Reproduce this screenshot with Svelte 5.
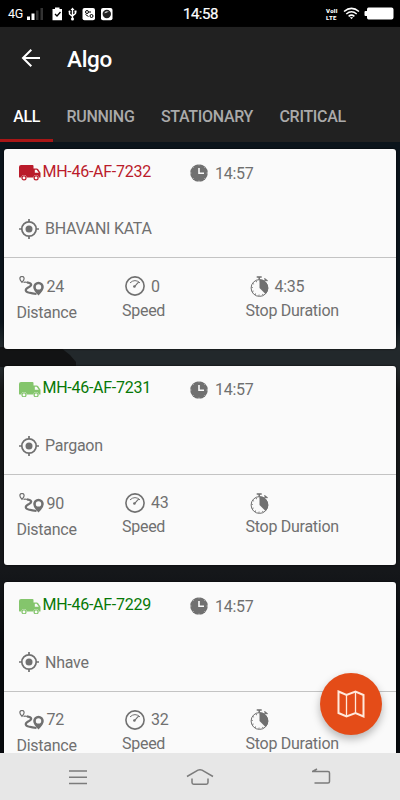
<script>
  const tabs = ['ALL', 'RUNNING', 'STATIONARY', 'CRITICAL'];
  const vehicles = [
    { plate: 'MH-46-AF-7232', time: '14:57', place: 'BHAVANI KATA', distance: '24', speed: '0', stop: '4:35', stopped: true },
    { plate: 'MH-46-AF-7231', time: '14:57', place: 'Pargaon', distance: '90', speed: '43', stop: '', stopped: false },
    { plate: 'MH-46-AF-7229', time: '14:57', place: 'Nhave', distance: '72', speed: '32', stop: '', stopped: false }
  ];
</script>

<div class="app">
  <div class="status">
    <span class="net">4G</span>
    <svg class="signal" width="17" height="14" viewBox="0 0 17 14">
      <path d="M0 9.500h3V13H0z M4.500 6.500h3V13h-3z" fill="#fff" />
      <path d="M9 3.500h2.500V13H9z M13.500 1H16v12h-2.500z" fill="#333" />
    </svg>
    <svg class="notes" width="62" height="14" viewBox="0 0 62 14">
      <path d="M.5 2H3V.5h4.500V2H10v11.300H.5z" fill="#fff" />
      <path d="M3 7l2 2 3.500-4" fill="none" stroke="#000" stroke-width="1.300" />
      <g fill="none" stroke="#fff" stroke-width="1.400">
        <path d="M20.500 2v10M17.500 4.500V7l3 2.500M23.500 4.500V6.500l-3 2.500" />
      </g>
      <path d="M18.500 3l2-2.500 2 2.500z" fill="#fff" /><circle cx="20.500" cy="12" r="1.500" fill="#fff" />
      <circle cx="17.500" cy="4.500" r="1" fill="#fff" /><path d="M22.500 3.500h2v2h-2z" fill="#fff" />
      <rect x="30.500" y="1" width="12.500" height="12.300" rx="2" fill="#fff" />
      <g fill="none" stroke="#000" stroke-width="1"><circle cx="35" cy="5" r="1.500" /><circle cx="39.500" cy="9" r="1.500" /><path d="M33.500 7.500l3 2M38 4v2" /></g>
      <rect x="49" y="1" width="11.500" height="12.300" rx="2" fill="#fff" />
      <circle cx="54.800" cy="7" r="4.200" fill="#222" /><path d="M52 6.300l2-2.100 3 .3-3 1.600z" fill="#ccc" />
    </svg>
    <span class="clock">14:58</span>
    <span class="volte"><span>Voll</span><span>LTE</span></span>
    <svg class="wifi" width="17" height="13" viewBox="0 0 17 13" fill="none" stroke="#fff" stroke-width="1.500">
      <path d="M1 4.500Q8.500-1.800 16 4.500M3.300 7Q8.500 2.600 13.700 7M5.600 9.300Q8.500 6.900 11.400 9.300" />
      <path d="M6.800 10.200h3.400L8.500 12.300z" fill="#fff" stroke="none" />
    </svg>
    <svg class="battery" width="30" height="13" viewBox="0 0 30 13">
      <path d="M4.500.500h23q2 0 2 2v8q0 2-2 2h-23q-1.500 0-1.500-2V9H1.500Q.5 9 .5 8V5Q.5 4 1.500 4H3V2.500q0-2 1.500-2z" fill="#fff" />
    </svg>
  </div>

  <header>
    <div class="titlebar">
      <svg width="20" height="20" viewBox="0 0 20 20" fill="none" stroke="#fff" stroke-width="2">
        <path d="M19 10H3M10.300 1.700L2 10l8.300 8.300" />
      </svg>
      <h1>Algo</h1>
    </div>
    <nav class="tabs">
      {#each tabs as tab, i}
        <span class="tab" class:active={i === 0}>{tab}</span>
      {/each}
    </nav>
  </header>

  <main>
    <svg class="ridge" width="400" height="20" viewBox="0 0 400 20">
      <path d="M0 0H60L70 8 76 15V20H0z" fill="#121314" />
    </svg>
    {#each vehicles as v}
      <article>
        <div class="top">
          <div class="plate" class:stopped={v.stopped}>
            <svg width="22" height="15.500" viewBox="0 0 22 16" preserveAspectRatio="none">
              <path d="M2 0h11.500q1 0 1 1v2.500h3.200q.8 0 1.300.7L21.500 8v5H19.700a2.600 2.600 0 0 0-5.200 0H7.600a2.600 2.600 0 0 0-5.200 0H1q-1 0-1-1V2Q0 0 2 0z" fill="currentColor" />
              <path d="M15.800 5h1.900l2.100 3h-4z" fill="#fafafa" />
              <circle cx="5" cy="13.300" r="2" fill="#fafafa" stroke="currentColor" stroke-width="1.200" />
              <circle cx="17.100" cy="13.300" r="2" fill="#fafafa" stroke="currentColor" stroke-width="1.200" />
            </svg>
            <span>{v.plate}</span>
          </div>
          <div class="time">
            <svg width="18" height="18" viewBox="0 0 18 18">
              <circle cx="9" cy="9" r="8.800" fill="#707070" />
              <path d="M9 4v5.300h5" fill="none" stroke="#fafafa" stroke-width="1.600" />
              <path d="M9 0v1.300M9 16.700V18M0 9h1.300M16.700 9H18M2.600 2.600l.9.900M14.500 14.500l.9.900M2.600 15.400l.9-.9M14.500 3.500l.9-.9" stroke="#fafafa" stroke-width=".7" />
            </svg>
            <span>{v.time}</span>
          </div>
        </div>
        <div class="place">
          <svg width="20" height="20" viewBox="0 0 20 20" fill="none" stroke="#707070" stroke-width="1.700">
            <circle cx="10" cy="10" r="7.200" />
            <circle cx="10" cy="10" r="3.500" fill="#707070" stroke="none" />
            <path d="M10 0v3M10 17v3M0 10h3M17 10h3" />
          </svg>
          <span>{v.place}</span>
        </div>
        <div class="stats">
          <div class="stat distance">
            <div class="value">
              <svg width="26" height="20" viewBox="0 0 26 20" fill="none" stroke="#707070">
                <path d="M3 6.300Q.7 3.800.9 2.500a2.100 2.100 0 0 1 4.200 0Q5.300 3.800 3 6.300z" stroke-width="1.200" />
                <path d="M4.500 6.300Q6.500 5.900 9 6.500" stroke-width="1.200" />
                <path d="M8 6.400c5 .9 5.300 2.800 2 4.600-4.500 2.100-4 4.500-.5 5.500q4 1 8 1.500" stroke-width="2.200" />
                <path d="M19.500 19.500Q14.200 14.500 14.200 11.100a5.300 5.300 0 0 1 10.600 0Q24.800 14.500 19.500 19.500z" fill="#707070" stroke="none" />
                <circle cx="19.500" cy="10.900" r="2.700" fill="#fafafa" stroke="none" />
              </svg>
              <span>{v.distance}</span>
            </div>
            <div class="label">Distance</div>
          </div>
          <div class="stat speed">
            <div class="value">
              <svg width="20" height="20" viewBox="0 0 20 20" fill="none" stroke="#707070">
                <circle cx="10" cy="10" r="9.100" stroke-width="1.600" />
                <path d="M5 6.900Q10 2.300 15 6.900" stroke-width="1" />
                <path d="M9.200 10.800L13.800 5.800" stroke-width="1.100" />
                <circle cx="9.400" cy="10.500" r="1.300" fill="#707070" stroke="none" />
              </svg>
              <span>{v.speed}</span>
            </div>
            <div class="label">Speed</div>
          </div>
          <div class="stat stop">
            <div class="value">
              <svg width="19" height="21" viewBox="0 0 19 21" fill="none" stroke="#707070">
                <circle cx="9.500" cy="12" r="8.400" stroke-width="1" />
                <circle cx="9.500" cy="12" r="7.300" stroke-width="1.400" stroke-dasharray=".8 3.020" />
                <path d="M9.500 12V3.600A8.400 8.400 0 0 1 15.500 18z" fill="#707070" stroke="none" />
                <path d="M6.700 1h5M9.200 1v2.700M14.300 2.500l3.200 2.500M15.800 3.600l-1.200 1.500" stroke-width="1.500" />
              </svg>
              <span>{v.stop}</span>
            </div>
            <div class="label">Stop Duration</div>
          </div>
        </div>
      </article>
    {/each}
  </main>

  <footer>
    <svg width="20" height="16" viewBox="0 0 20 16" fill="none" stroke="#7c7c7c" stroke-width="1.500"><path d="M1 2h18M1 8.200h18M1 14.400h18" /></svg>
    <svg width="28" height="18" viewBox="0 0 28 18" fill="none" stroke="#7c7c7c" stroke-width="1.500"><path d="M1 8.500L12 2.200q2-1.100 4 0L27 8.500M6 10.500v4q0 1.700 1.700 1.700h12.600q1.700 0 1.700-1.700v-4" /></svg>
    <svg width="20" height="17" viewBox="0 0 20 17" fill="none" stroke="#7c7c7c" stroke-width="1.500"><path d="M1 3.500h16q1.500 0 1.500 1.500v8.500q0 1.500-1.500 1.500H3.500M1.500 3.500L6 1" /></svg>
  </footer>

  <button class="fab" aria-label="Map">
    <svg width="28" height="28" viewBox="0 0 28 28" fill="none" stroke="#ffe9dc" stroke-width="2">
      <path d="M1.500 1.500L9.500 5 18.500 1.500 26.500 5V26.500L18.500 23 9.500 26.500 1.500 23z" />
      <path d="M9.500 5v21M18.500 1.500v21" stroke-width="1.300" />
    </svg>
  </button>
</div>

<style>
  :global(body) { margin: 0; }
  .app {
    position: relative;
    display: flex;
    flex-direction: column;
    width: 400px;
    height: 800px;
    overflow: hidden;
    font-family: Roboto, "Liberation Sans", sans-serif;
    font-size: 16px;
    letter-spacing: -0.270px;
    line-height: 20px;
    color: #707070;
    background: #0b1319;
  }
  svg { display: block; flex: none; }
  .status {
    display: flex;
    align-items: center;
    flex: none;
    height: 27px;
    padding: 0 6px 0 8px;
    background: #000;
    color: #fff;
  }
  .net { width: 19px; font-size: 12.500px; letter-spacing: -0.400px; }
  .signal { margin-right: 8px; }
  .clock { margin: 1px 0 0 69px; width: 38px; font-size: 15px; letter-spacing: -0.500px; -webkit-text-stroke: .2px #fff; }
  .volte {
    display: flex;
    flex-direction: column;
    width: 14px;
    margin-left: auto;
    font-size: 6px;
    letter-spacing: 0.300px;
    font-weight: 900;
    line-height: 7px;
  }
  .wifi { margin: 0 4px 0 3px; }
  header { flex: none; height: 115px; background: #212121; box-shadow: 0 1px 2px #1b2226; }
  .titlebar { display: flex; align-items: center; height: 64px; padding-left: 21px; box-sizing: border-box; }
  .titlebar svg { margin-top: -2px; }
  h1 { margin: -1px 0 0 26px; font-size: 22.500px; line-height: 28px; font-weight: 500; color: #fff; }
  .tabs { display: flex; height: 51px; }
  .tab {
    box-sizing: border-box;
    padding: 15.500px 13.200px 0;
    font-size: 16px;
    letter-spacing: -0.300px;
    font-weight: 500;
    color: #aaa;
  }
  .tab.active { color: #fff; border-bottom: 3px solid #a81616; }
  main {
    position: relative;
    display: flex;
    flex-direction: column;
    flex: 1;
    gap: 17px;
    min-height: 0;
    padding: 7px 4px 0;
    overflow: hidden;
    background: linear-gradient(#0b141b 0, #0b141b 180px, #22282b 205px, #22282b 226px, #151617 250px, #15171a 430px, #080a0e 500px);
  }
  .ridge { position: absolute; left: 0; top: 205px; }
  article {
    position: relative;
    flex: none;
    height: 199.600px;
    border-radius: 3px;
    background: #fafafa;
    box-shadow: 0 0 2px #000;
  }
  .top { display: flex; height: 70.400px; padding: 12.900px 0 0 15px; box-sizing: border-box; }
  .plate { display: flex; width: 171px; color: #84c56c; }
  .plate svg { margin: 3.500px 1.500px 0 0; }
  .plate span { color: #067806; }
  .plate.stopped, .plate.stopped span { color: #ba1b2b; }
  .time { display: flex; gap: 7px; padding-top: 2px; }
  .time svg { margin-top: .3px; }
  .place { display: flex; gap: 6px; height: 38px; padding-left: 15px; }
  .place svg { margin-top: -.3px; }
  .stats { display: flex; height: 90px; border-top: 1px solid #c3c3c3; }
  .stat { padding-top: 18.300px; }
  .value { display: flex; height: 24px; }
  .distance { width: 105.500px; padding-left: 12.500px; }
  .distance .value { height: 26.300px; padding-left: 2px; gap: 2px; padding-top: .3px; box-sizing: border-box; }
  .distance svg { margin-top: -.5px; }
  .speed { width: 123.500px; }
  .speed .value { padding-left: 3px; gap: 6px; }
  .speed svg { margin-top: -.3px; }
  .stop .value { padding-left: 4px; gap: 6px; }
  .stop svg { margin-top: -.7px; }
  footer {
    display: flex;
    align-items: center;
    justify-content: space-between;
    flex: none;
    height: 47px;
    padding: 0 69px 0 68px;
    box-sizing: border-box;
    background: #e7e7e7;
  }
  .fab {
    position: absolute;
    left: 320px;
    top: 673px;
    display: flex;
    align-items: center;
    justify-content: center;
    width: 62px;
    height: 62px;
    padding: 0;
    border: 0;
    border-radius: 50%;
    background: #e44c18;
    box-shadow: 0 4px 8px rgba(0, 0, 0, .28);
  }
</style>
